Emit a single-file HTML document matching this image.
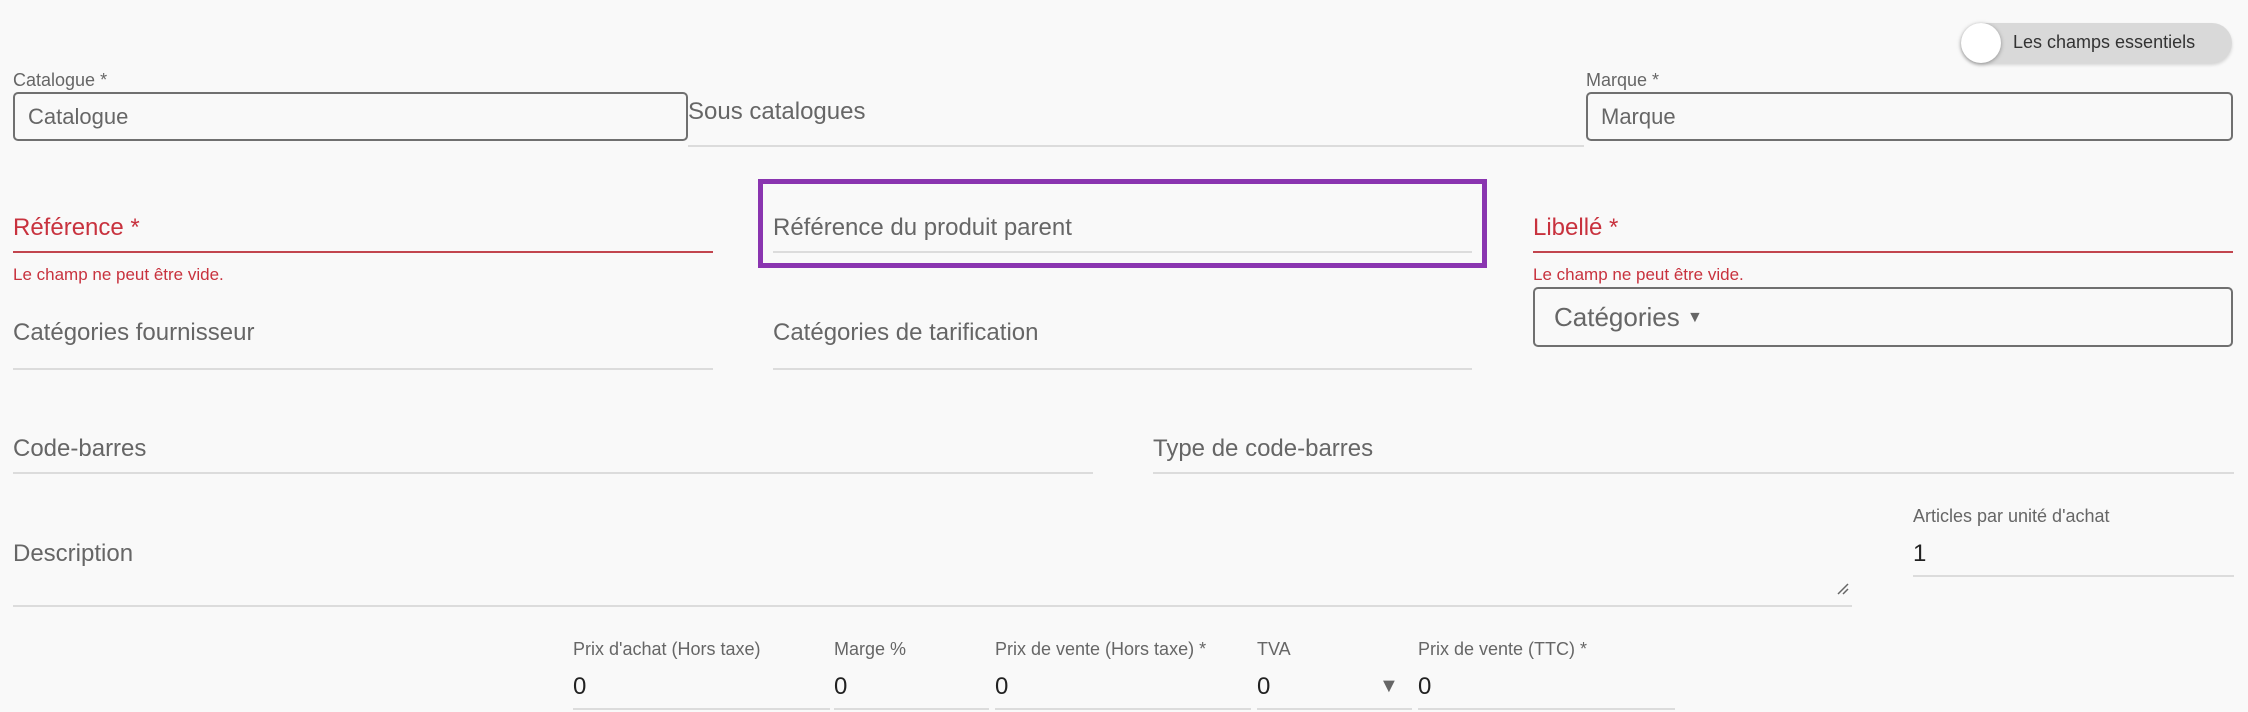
<!DOCTYPE html>
<html><head><meta charset="utf-8"><style>
body{margin:0;width:2248px;height:712px;background:#f9f9f9;font-family:"Liberation Sans",sans-serif;position:relative;overflow:hidden;color:#666}
.a{position:absolute;white-space:nowrap}
.l{font-size:18px;color:#666}
.t{font-size:24px;color:#666}
.u{position:absolute;height:2px;background:#dcdcdc}
.r{color:#c8323e}
.box{position:absolute;border:2px solid #707070;border-radius:5px;box-sizing:border-box}
</style></head><body>
<div class="a" style="left:1961px;top:23px;width:271px;height:40px;background:#d9d9d9;border-radius:20px;box-shadow:0 2px 3px rgba(0,0,0,.15)"></div>
<div class="a" style="left:1961px;top:23px;width:40px;height:40px;background:#fff;border-radius:50%;box-shadow:0 1px 4px rgba(0,0,0,.35)"></div>
<div class="a" style="left:2013px;top:32px;font-size:18px;color:#333">Les champs essentiels</div>

<div class="a l" style="left:13px;top:70px">Catalogue *</div>
<div class="box" style="left:13px;top:92px;width:675px;height:49px"></div>
<div class="a t" style="left:28px;top:104px;font-size:22px">Catalogue</div>
<div class="a t" style="left:688px;top:98px">Sous catalogues</div>
<div class="u" style="left:688px;top:145px;width:896px"></div>
<div class="a l" style="left:1586px;top:70px">Marque *</div>
<div class="box" style="left:1586px;top:92px;width:647px;height:49px"></div>
<div class="a t" style="left:1601px;top:104px;font-size:22px">Marque</div>

<div class="a t r" style="left:13px;top:214px">Référence *</div>
<div class="u" style="left:13px;top:251px;width:700px;background:#c2454e"></div>
<div class="a r" style="left:13px;top:265px;font-size:17px">Le champ ne peut être vide.</div>
<div class="a" style="left:758px;top:179px;width:729px;height:89px;border:5px solid #8a35b0;box-sizing:border-box"></div>
<div class="a t" style="left:773px;top:214px">Référence du produit parent</div>
<div class="u" style="left:773px;top:251px;width:699px"></div>
<div class="a t r" style="left:1533px;top:214px">Libellé *</div>
<div class="u" style="left:1533px;top:251px;width:700px;background:#c2454e"></div>
<div class="a r" style="left:1533px;top:265px;font-size:17px">Le champ ne peut être vide.</div>

<div class="box" style="left:1533px;top:287px;width:700px;height:60px"></div>
<div class="a" style="left:1554px;top:302px;font-size:26px;color:#666">Catégories <span style="font-size:16px;vertical-align:4px">▼</span></div>

<div class="a t" style="left:13px;top:319px">Catégories fournisseur</div>
<div class="u" style="left:13px;top:368px;width:700px"></div>
<div class="a t" style="left:773px;top:319px">Catégories de tarification</div>
<div class="u" style="left:773px;top:368px;width:699px"></div>

<div class="a t" style="left:13px;top:435px">Code-barres</div>
<div class="u" style="left:13px;top:472px;width:1080px"></div>
<div class="a t" style="left:1153px;top:435px">Type de code-barres</div>
<div class="u" style="left:1153px;top:472px;width:1081px"></div>

<div class="a t" style="left:13px;top:540px">Description</div>
<div class="u" style="left:13px;top:605px;width:1839px"></div>
<svg class="a" style="left:1836px;top:582px" width="14" height="14"><path d="M2 12L12 2M7 12L12 7" stroke="#666" stroke-width="1.5"/></svg>
<div class="a l" style="left:1913px;top:506px">Articles par unité d'achat</div>
<div class="a t" style="left:1913px;top:540px;color:#222">1</div>
<div class="u" style="left:1913px;top:575px;width:321px"></div>

<div class="a l" style="left:573px;top:639px">Prix d'achat (Hors taxe)</div>
<div class="a l" style="left:834px;top:639px">Marge %</div>
<div class="a l" style="left:995px;top:639px">Prix de vente (Hors taxe) *</div>
<div class="a l" style="left:1257px;top:639px">TVA</div>
<div class="a l" style="left:1418px;top:639px">Prix de vente (TTC) *</div>
<div class="a t" style="left:573px;top:673px;color:#222">0</div>
<div class="a t" style="left:834px;top:673px;color:#222">0</div>
<div class="a t" style="left:995px;top:673px;color:#222">0</div>
<div class="a t" style="left:1257px;top:673px;color:#222">0</div>
<div class="a" style="left:1379px;top:675px;font-size:20px;color:#666">▼</div>
<div class="a t" style="left:1418px;top:673px;color:#222">0</div>
<div class="u" style="left:573px;top:708px;width:257px"></div>
<div class="u" style="left:834px;top:708px;width:155px"></div>
<div class="u" style="left:995px;top:708px;width:256px"></div>
<div class="u" style="left:1257px;top:708px;width:155px"></div>
<div class="u" style="left:1418px;top:708px;width:257px"></div>
</body></html>
